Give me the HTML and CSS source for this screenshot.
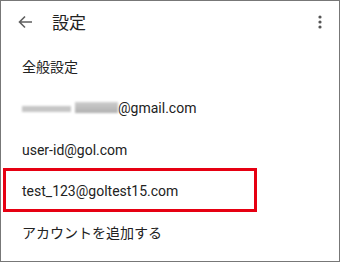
FILE: index.html
```html
<!DOCTYPE html>
<html lang="ja">
<head>
<meta charset="utf-8">
<link rel="stylesheet" href="styles.css">
</head>
<body>
<div class="frame">
  <header class="appbar">
    <svg class="back" width="16" height="16" viewBox="0 0 16 16"><path d="M15 8H2.5M8 2.5L2.5 8L8 13.5" fill="none" stroke="#5f5f5f" stroke-width="1.6"/></svg>
    <span class="title">設定</span>
    <svg class="more" width="6" height="16" viewBox="0 0 6 16"><circle cx="3" cy="3" r="1.6" fill="#555"/><circle cx="3" cy="8" r="1.6" fill="#555"/><circle cx="3" cy="13" r="1.6" fill="#555"/></svg>
  </header>
  <ul class="list">
    <li class="item">全般設定</li>
    <li class="item tall"><span class="blur"><i class="b1"></i><i class="b2"></i></span>@gmail.com</li>
    <li class="item">user-id@gol.com</li>
    <li class="item marked">test_123@goltest15.com</li>
    <li class="item">アカウントを追加する</li>
  </ul>
</div>
</body>
</html>
```
FILE: styles.css
```css
html, body { margin: 0; padding: 0; background: #fff; }
.frame {
  width: 340px; height: 262px; box-sizing: border-box;
  border: 1px solid #777; overflow: hidden;
  font-family: Roboto, "Noto Sans CJK JP", sans-serif;
  color: #222;
}
.appbar {
  height: 41px; display: flex; align-items: center;
  padding: 0 0 0 16px;
}
.back { flex: none; margin-top: 1px; }
.title { font-size: 17px; margin-left: 19px; flex: 1; color: #222; }
.more { flex: none; margin-right: 16px; margin-top: 1px; }
.list { list-style: none; margin: 3px 0 0; padding: 0; }
.item {
  height: 41px; display: flex; align-items: center;
  padding-left: 21px; font-size: 14px; position: relative;
}
.item.tall { height: 43px; }
.blur { display: inline-flex; align-items: center; height: 12px; filter: blur(1.1px); }
.blur i { display: block; }
.b1 { width: 49px; height: 6px; margin-top: 2px; margin-right: 4px; background: #c6c6c6; }
.b2 { width: 43px; height: 11px; background: linear-gradient(#cdcdcd, #b0b0b0); }
.marked::after {
  content: ""; position: absolute; left: 2px; top: -2px;
  width: 248px; height: 38px;
  border: 3px solid #e60012;
}
```
